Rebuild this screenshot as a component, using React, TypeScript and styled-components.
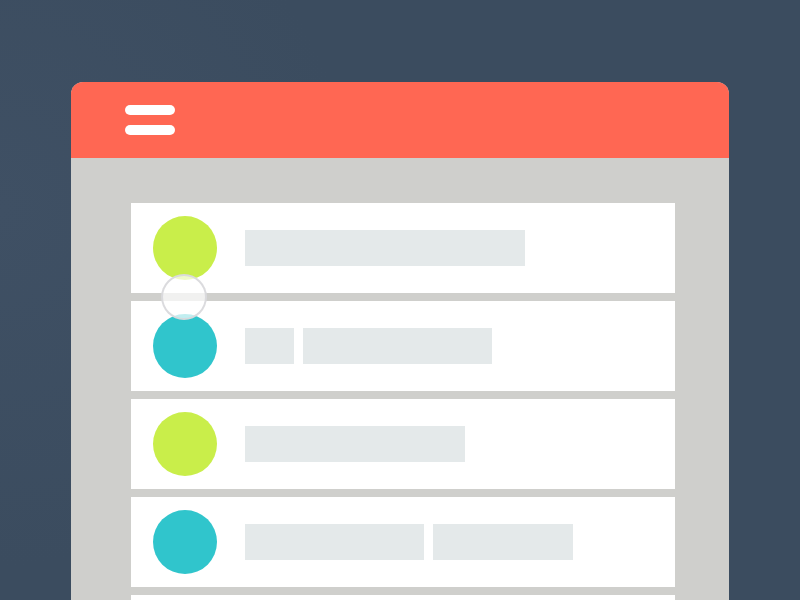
import React from 'react';
import styled, { createGlobalStyle } from 'styled-components';

const GlobalStyle = createGlobalStyle`
  html, body {
    margin: 0;
    padding: 0;
    height: 600px;
    overflow: hidden;
    font-family: "Liberation Sans", Arial, sans-serif;
    background: #3b4c5f;
  }
`;

const Stage = styled.div`
  width: 800px;
  height: 600px;
  padding: 82px 0 0 71px;
  box-sizing: border-box;
  background: radial-gradient(circle at 0% 35%, #3f5064 0%, #3b4c5f 40%, #3b4c5f 100%);
  overflow: hidden;
`;

const Panel = styled.div`
  width: 658px;
  height: 518px;
  border-radius: 12px 12px 0 0;
  overflow: hidden;
  display: flex;
  flex-direction: column;
  background: #cfcfcc;
`;

const Header = styled.header`
  height: 76px;
  flex-shrink: 0;
  background: #ff6753;
  display: flex;
  align-items: center;
  padding-left: 54px;
`;

const Burger = styled.div`
  display: flex;
  flex-direction: column;
  gap: 10px;
`;

const BurgerLine = styled.span`
  display: block;
  width: 50px;
  height: 10px;
  border-radius: 5px;
  background: #ffffff;
`;

const List = styled.div`
  position: relative;
  flex: 1;
  display: flex;
  flex-direction: column;
  gap: 8px;
  padding: 45px 0 0 60px;
`;

const Row = styled.div`
  width: 544px;
  height: 90px;
  flex-shrink: 0;
  background: #ffffff;
  display: flex;
  align-items: center;
  padding-left: 22px;
  box-sizing: border-box;
`;

const Avatar = styled.div<{ $tone: 'lime' | 'teal' }>`
  width: 64px;
  height: 64px;
  border-radius: 50%;
  flex-shrink: 0;
  background: ${(p) => (p.$tone === 'lime' ? '#c9ee4a' : '#30c5cc')};
`;

const Lines = styled.div`
  display: flex;
  gap: 9px;
  margin-left: 28px;
`;

const Bar = styled.div<{ $w: number }>`
  width: ${(p) => p.$w}px;
  height: 36px;
  background: #e4e9ea;
`;

const Touch = styled.div`
  position: absolute;
  left: 90px;
  top: 116px;
  width: 42px;
  height: 42px;
  border-radius: 50%;
  background: rgba(255, 255, 255, 0.7);
  border: 2px solid rgba(215, 215, 218, 0.9);
`;

const rows: { tone: 'lime' | 'teal'; bars: number[] }[] = [
  { tone: 'lime', bars: [280] },
  { tone: 'teal', bars: [49, 189] },
  { tone: 'lime', bars: [220] },
  { tone: 'teal', bars: [179, 140] },
  { tone: 'lime', bars: [250] },
];

export default function App() {
  return (
    <>
      <GlobalStyle />
      <Stage>
        <Panel>
          <Header>
            <Burger>
              <BurgerLine />
              <BurgerLine />
            </Burger>
          </Header>
          <List>
            {rows.map((r, i) => (
              <Row key={i}>
                <Avatar $tone={r.tone} />
                <Lines>
                  {r.bars.map((w, j) => (
                    <Bar key={j} $w={w} />
                  ))}
                </Lines>
              </Row>
            ))}
            <Touch />
          </List>
        </Panel>
      </Stage>
    </>
  );
}
